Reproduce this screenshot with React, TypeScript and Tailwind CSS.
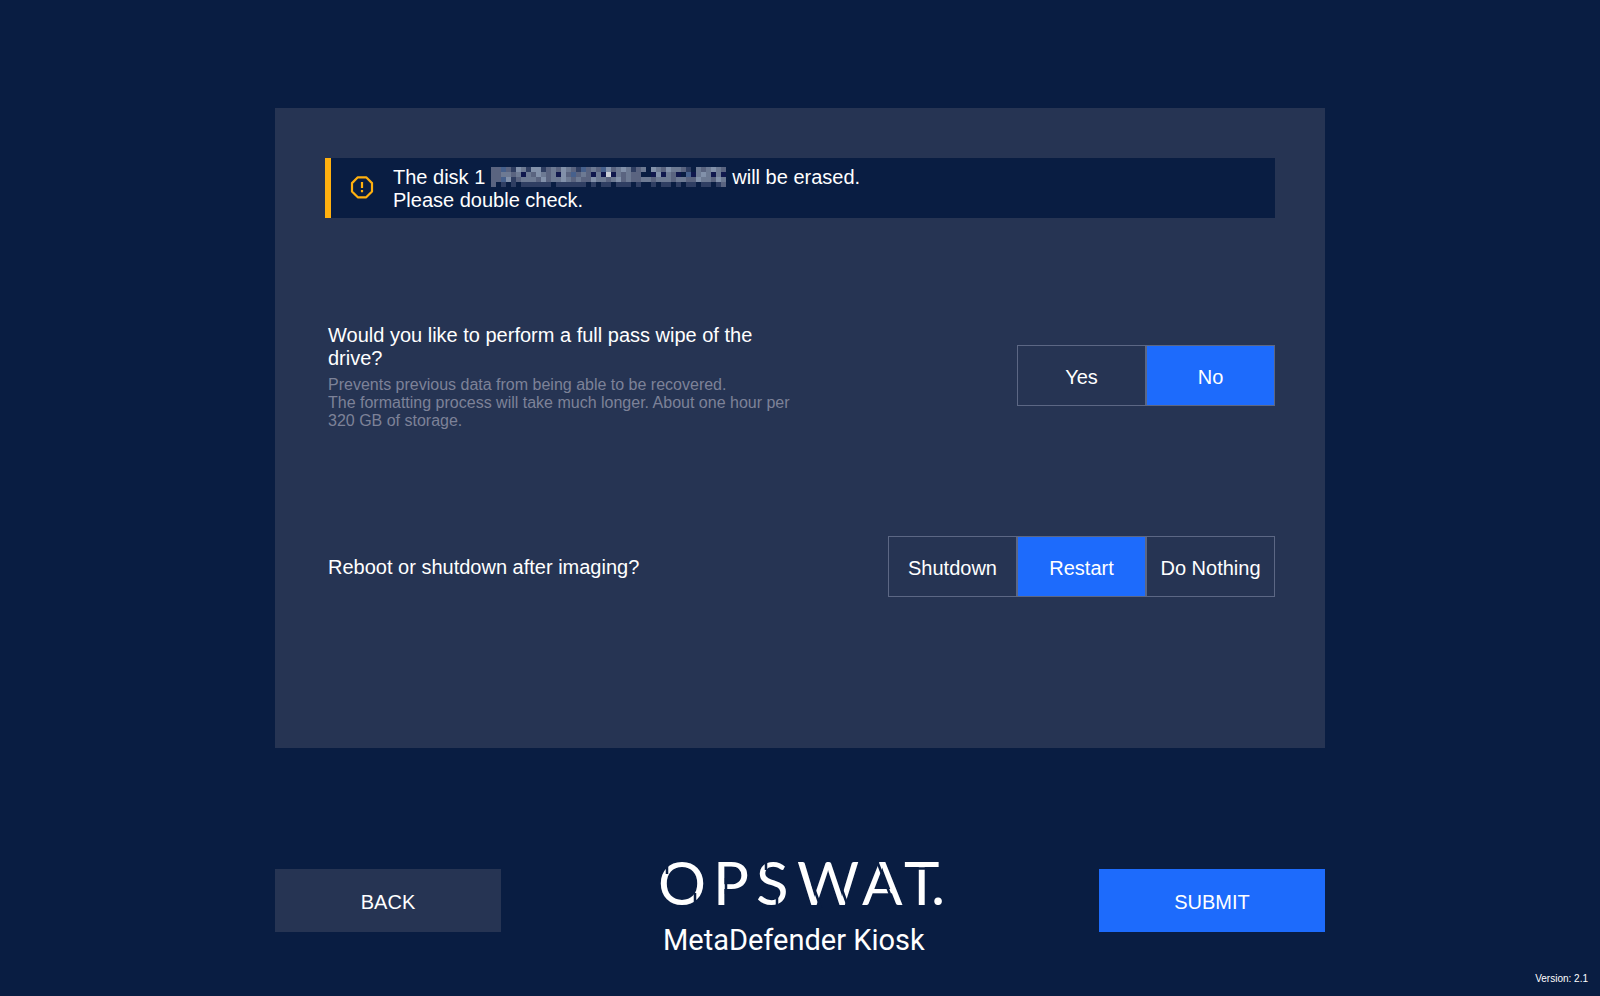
import { useState } from "react";

const shades: Record<string, string> = {
  a: "#2f3e62",
  b: "#5a6480",
  c: "#6d7a93",
  d: "#8291aa",
  e: "#46608c",
  n: "#10184d",
  w: "#c8cdd6",
};

const mosaic = [
  "bbebadcaddabcbdcbaebcbedbcdcabc.dcbdccba.cbcdcb",
  "bbccbcncbdcbcndbebcbncnwncbcbb..ndncbn.encdcncn",
  "bbedabcccbdbccdcbcbbdccbcdbcbbccbcccbccbbdccbdc",
  "b.a.a.aaaaaa.aaaaaa.a.aa.aaa.a..a.aa.a.aa.aa.ab",
];

function RedactedSerial() {
  return (
    <svg
      role="img"
      aria-label="Hidden serial number"
      className="mx-1.5 inline-block h-5 w-[235px] align-[-3px]"
      viewBox="0 0 235 20"
      shapeRendering="crispEdges"
    >
      {mosaic.flatMap((row, y) =>
        row.split("").map((cell, x) =>
          shades[cell] ? (
            <rect key={`${x}-${y}`} x={x * 5} y={y * 5} width="5" height="5" fill={shades[cell]} />
          ) : null,
        ),
      )}
    </svg>
  );
}

function WarningIcon() {
  return (
    <svg className="h-6 w-6 shrink-0" viewBox="0 0 24 24" fill="none" stroke="#ffb00f" strokeWidth="2.2" aria-hidden="true">
      <path d="M7.8 1.3h8.4L22 7.1v8.4L16.2 21.3H7.8L2 15.5V7.1z" strokeLinejoin="round" />
      <path d="M12 6v6M12 14v2.2" />
    </svg>
  );
}

function Choice({ label, options, initial }: { label: string; options: string[]; initial: string }) {
  const [selected, setSelected] = useState(initial);
  return (
    <div role="group" aria-label={label} className="flex shrink-0">
      {options.map((option) => (
        <button
          key={option}
          type="button"
          aria-pressed={selected === option}
          onClick={() => setSelected(option)}
          className={`h-[61px] w-[129px] border border-[#5c6784] pt-0.5 text-xl leading-6 ${
            selected === option ? "bg-[#1d6bfc]" : "bg-transparent"
          }`}
        >
          {option}
        </button>
      ))}
    </div>
  );
}

/* Wordmark letters with the stencil gaps laid over them in the page colour. */
function Logo() {
  return (
    <div>
      <svg className="block h-[72px] w-[290px]" viewBox="0 -12 290 72" role="img" aria-label="OPSWAT.">
        <g fontSize="60" fill="#fff" fontFamily="Lato, sans-serif">
          <text x="3" y="47">O</text>
          <text x="58" y="47">P</text>
          <text x="101" y="47">S</text>
          <text x="142" y="47">W</text>
          <text x="207" y="47">A</text>
          <text x="249" y="47">T</text>
          <text x="276" y="47">.</text>
        </g>
        <g stroke="#091d42" strokeWidth="2.5">
          <path d="M12 2V16M40 35V49" />
          <path d="M71 20V36" />
          <path d="M111 2V12M122 39V49" />
          <path d="M157.500 26L166 50M185 26L193.500 50" />
          <path d="M222 3L239.500 48" />
          <path d="M248 10.500H285" />
        </g>
      </svg>
      <p className="mt-[5px] pl-2 font-[Roboto,sans-serif] text-[29px] leading-[34px]">MetaDefender Kiosk</p>
    </div>
  );
}

export default function App() {
  return (
    <div className="flex min-h-screen flex-col bg-[#091d42] font-['Liberation_Sans',Arial,sans-serif] text-xl leading-[23px] text-white">
      <div className="mx-auto w-full max-w-[1050px] pt-[108px]">
        <main className="bg-[#263453] px-[50px] pt-[50px] pb-[151px]">
          <div role="alert" className="flex h-[60px] items-center gap-[19px] border-l-6 border-[#ffb00f] bg-[#091d42] pl-[19px]">
            <WarningIcon />
            <p className="pt-0.5">
              The disk 1<RedactedSerial />will be erased.
              <br />
              Please double check.
            </p>
          </div>

          <section className="mt-[106px] flex items-start justify-between pl-[3px]">
            <div className="w-[470px]">
              <h2>Would you like to perform a full pass wipe of the drive?</h2>
              <p className="mt-1.5 text-base leading-[18px] text-[#7d8298]">
                Prevents previous data from being able to be recovered.
                <br />
                The formatting process will take much longer. About one hour per 320 GB of storage.
              </p>
            </div>
            <div className="pt-[21px]">
              <Choice label="Full pass wipe" options={["Yes", "No"]} initial="No" />
            </div>
          </section>

          <section className="mt-[106px] flex items-center justify-between pl-[3px]">
            <h2 className="pt-0.5">Reboot or shutdown after imaging?</h2>
            <Choice label="After imaging" options={["Shutdown", "Restart", "Do Nothing"]} initial="Restart" />
          </section>
        </main>

        <footer className="mt-[98px] flex items-start justify-between">
          <button type="button" className="mt-[23px] h-[63px] w-[226px] bg-[#263453] pt-1">
            BACK
          </button>
          <Logo />
          <button type="button" className="mt-[23px] h-[63px] w-[226px] bg-[#1d6bfc] pt-1">
            SUBMIT
          </button>
        </footer>
      </div>
      <p className="mt-auto self-end pr-3 pb-[11px] text-[10px] leading-3">Version: 2.1</p>
    </div>
  );
}
